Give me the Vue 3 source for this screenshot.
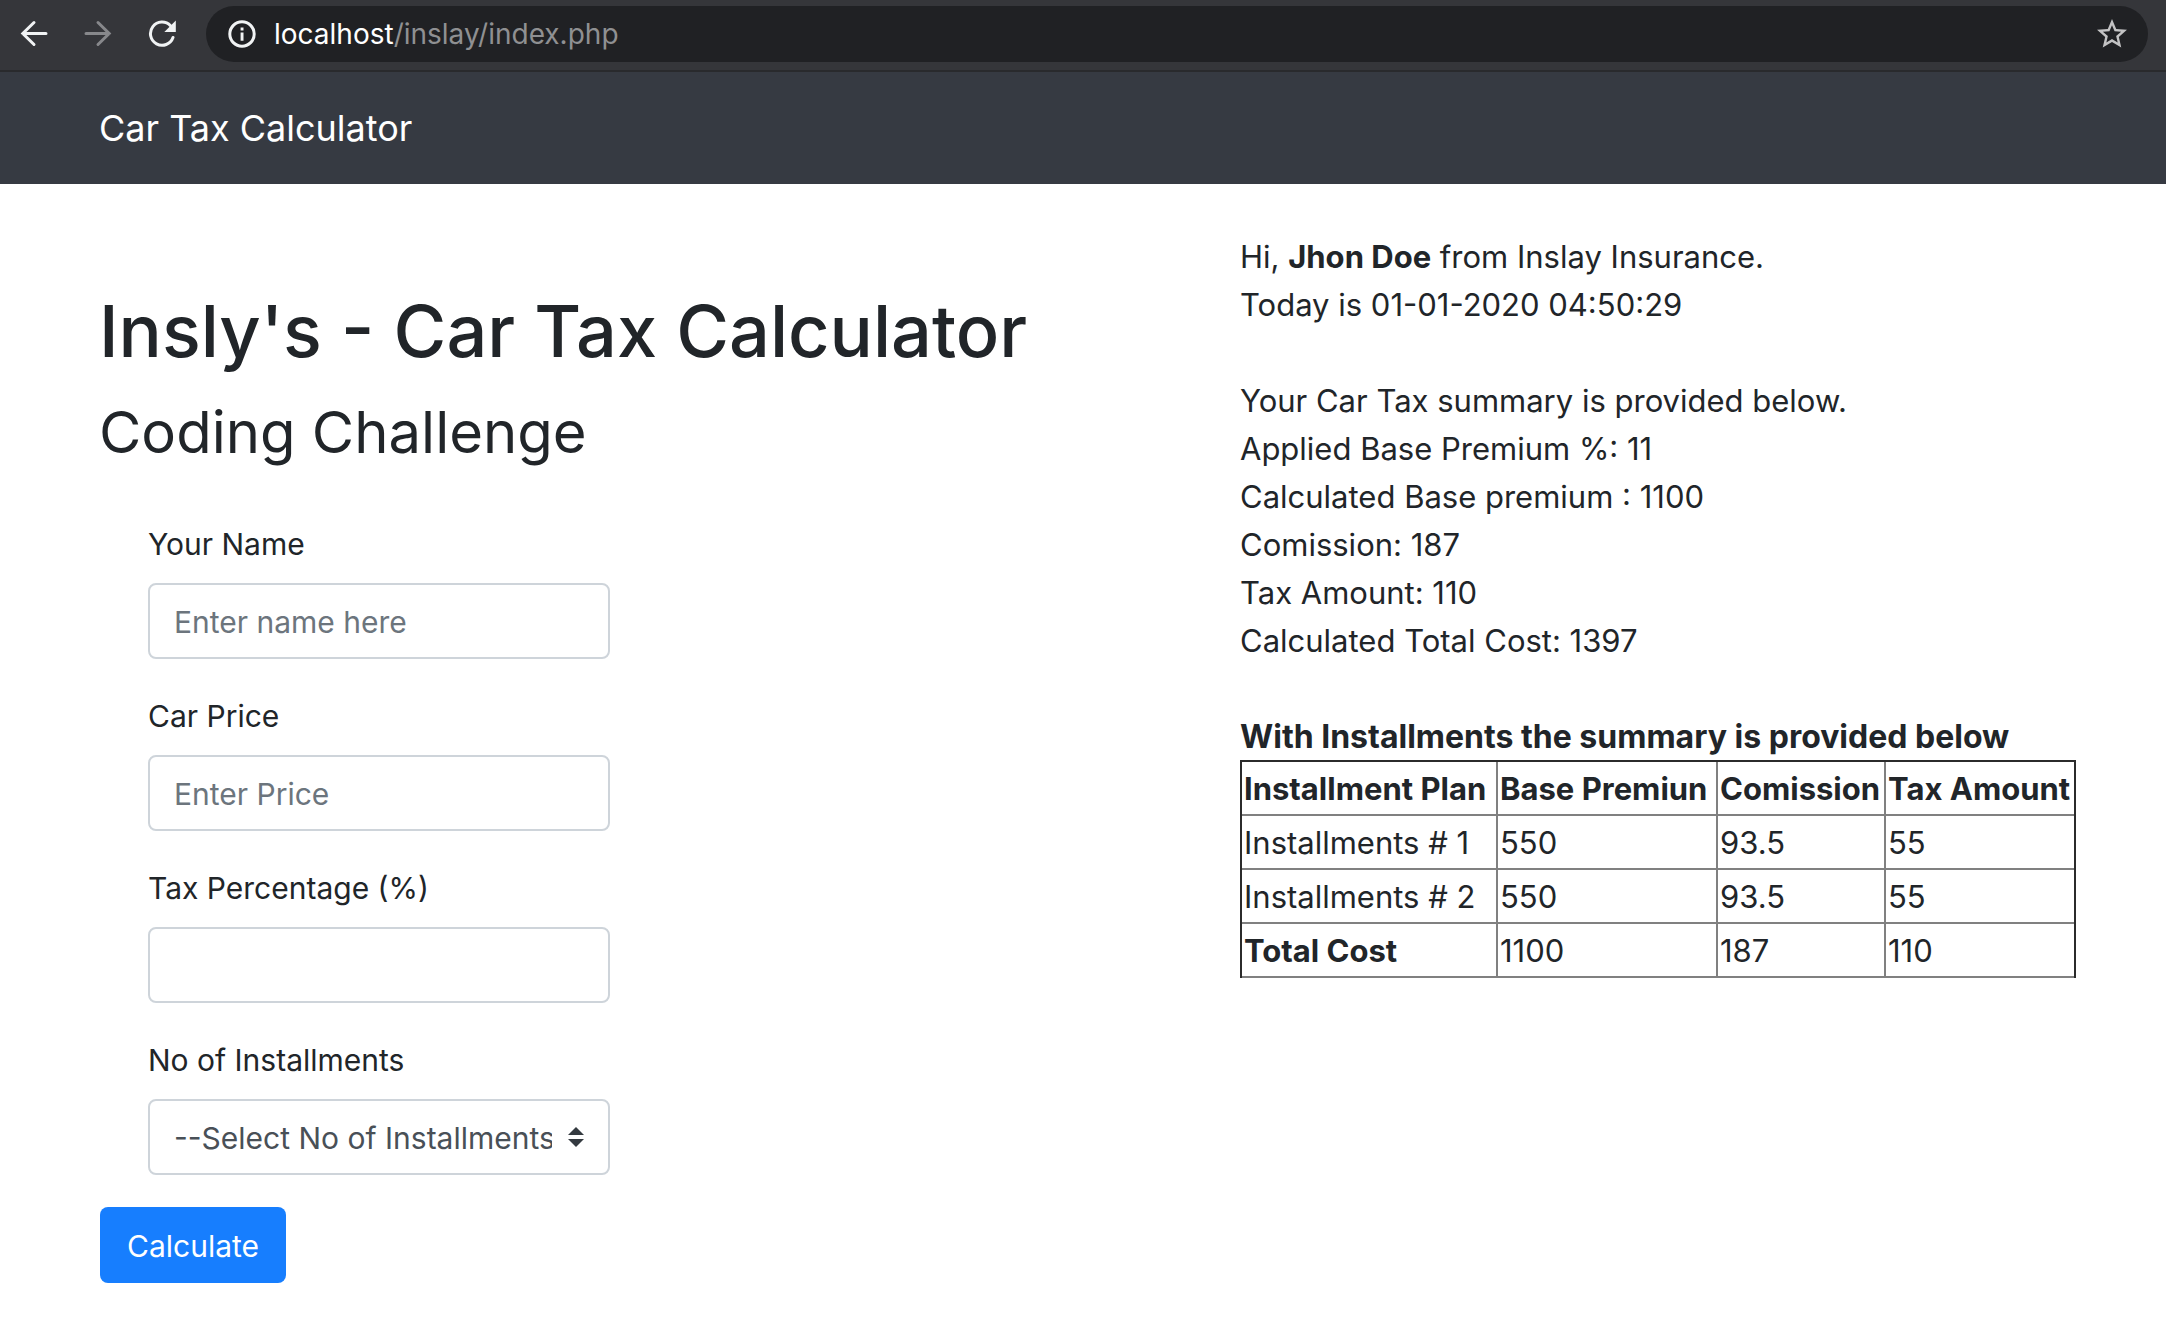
<script setup>
import { ref } from 'vue'

const fields = [
  { id: 'name', label: 'Your Name', placeholder: 'Enter name here' },
  { id: 'price', label: 'Car Price', placeholder: 'Enter Price' },
  { id: 'tax', label: 'Tax Percentage (%)', placeholder: '' },
]
const values = ref({ name: '', price: '', tax: '' })
const installments = ref('')

const summary = [
  'Your Car Tax summary is provided below.',
  'Applied Base Premium %: 11',
  'Calculated Base premium : 1100',
  'Comission: 187',
  'Tax Amount: 110',
  'Calculated Total Cost: 1397',
]

const rows = [
  ['Installments # 1', '550', '93.5', '55'],
  ['Installments # 2', '550', '93.5', '55'],
]
const total = ['1100', '187', '110']
</script>

<template>
  <div class="page">
    <div class="toolbar">
      <button class="tool" type="button" aria-label="Back">
        <svg viewBox="0 0 28 28"><path d="M26 13.500H3M14 2.500L2.800 13.500L14 24.500" /></svg>
      </button>
      <button class="tool dim" type="button" aria-label="Forward">
        <svg viewBox="0 0 28 28"><path d="M2 13.500H25M14 2.500L25.200 13.500L14 24.500" /></svg>
      </button>
      <button class="tool" type="button" aria-label="Reload">
        <svg viewBox="0 0 28 28">
          <path d="M25 17.500A11.600 11.600 0 1 1 22.500 5.700" />
          <path class="solid" d="M27.800 0.500V12H16.300z" />
        </svg>
      </button>
      <div class="address">
        <svg class="info" viewBox="0 0 28 28">
          <circle cx="14" cy="14" r="12.200" />
          <path class="solid" d="M12.600 12.500h2.900v8.200h-2.900zM12.600 7.600h2.900v2.900h-2.900z" />
        </svg>
        <span class="url">localhost<span class="path">/inslay/index.php</span></span>
        <button class="star" type="button" aria-label="Bookmark this page">
          <svg viewBox="0 0 24 24">
            <path d="M22 9.240l-7.190-.62L12 2 9.190 8.630 2 9.240l5.460 4.730L5.820 21 12 17.270 18.180 21l-1.630-7.030L22 9.240zM12 15.400l-3.760 2.270 1-4.280-3.320-2.880 4.380-.38L12 6.100l1.710 4.040 4.380.38-3.320 2.880 1 4.280L12 15.400z" />
          </svg>
        </button>
      </div>
    </div>

    <nav class="navbar"><a class="brand" href="#">Car Tax Calculator</a></nav>

    <main class="content">
      <section class="calculator">
        <h1>Insly's - Car Tax Calculator</h1>
        <h2>Coding Challenge</h2>
        <form @submit.prevent>
          <div class="fields">
            <div v-for="f in fields" :key="f.id" class="field">
              <label :for="f.id">{{ f.label }}</label>
              <input :id="f.id" v-model="values[f.id]" class="control" type="text" :placeholder="f.placeholder" />
            </div>
            <div class="field">
              <label for="installments">No of Installments</label>
              <div class="select-wrap">
                <select id="installments" v-model="installments" class="control">
                  <option value="">--Select No of Installments--</option>
                  <option v-for="n in 12" :key="n" :value="n">{{ n }}</option>
                </select>
                <svg class="caret" viewBox="0 0 4 5"><path d="M2 0L0 2h4zm0 5L0 3h4z" /></svg>
              </div>
            </div>
          </div>
          <button class="submit" type="submit">Calculate</button>
        </form>
      </section>

      <section class="result">
        <p>Hi, <b>Jhon Doe</b> from Inslay Insurance.</p>
        <p>Today is 01-01-2020 04:50:29</p>
        <div class="group">
          <p v-for="line in summary" :key="line">{{ line }}</p>
        </div>
        <div class="group">
          <p class="table-title"><b>With Installments the summary is provided below</b></p>
          <table>
            <colgroup>
              <col class="plan" /><col class="premium" /><col class="comission" /><col class="amount" />
            </colgroup>
            <thead>
              <tr>
                <th>Installment Plan</th>
                <th>Base Premiun</th>
                <th>Comission</th>
                <th>Tax Amount</th>
              </tr>
            </thead>
            <tbody>
              <tr v-for="row in rows" :key="row[0]">
                <td v-for="(cell, i) in row" :key="i">{{ cell }}</td>
              </tr>
              <tr>
                <th>Total Cost</th>
                <td v-for="cell in total" :key="cell">{{ cell }}</td>
              </tr>
            </tbody>
          </table>
        </div>
      </section>
    </main>
  </div>
</template>

<style>
body {
  margin: 0;
  background: #fff;
}
</style>

<style scoped>
.page {
  font-family: Inter, "Liberation Sans", sans-serif;
  font-size: 31px;
  line-height: 48px;
  color: #212529;
}
.page * {
  box-sizing: border-box;
}
button,
input,
select {
  font: inherit;
  margin: 0;
}
svg {
  display: block;
}

.toolbar {
  display: flex;
  align-items: center;
  gap: 36px;
  padding: 6px 18px 8px 20px;
  background: #35363a;
  border-bottom: 2px solid #292a2d;
}
.tool,
.star {
  padding: 0;
  border: 0;
  background: none;
}
.tool svg,
.info {
  width: 28px;
  height: 28px;
  fill: none;
  stroke: #f1f3f4;
  stroke-width: 3;
  stroke-linecap: round;
}
.tool.dim svg {
  stroke: #87888b;
}
.tool .solid,
.info .solid {
  fill: #f1f3f4;
  stroke: none;
}
.address {
  flex: 1;
  display: flex;
  align-items: center;
  height: 56px;
  margin-left: -6px;
  padding: 0 18px 0 22px;
  border-radius: 28px;
  background: #202124;
}
.url {
  flex: 1;
  margin-left: 18px;
  font-size: 28px;
  color: #fff;
}
.path {
  color: #8f9092;
}
.star svg {
  width: 36px;
  height: 36px;
  fill: #c3c3c4;
}

.navbar {
  padding: 32px 99px;
  background: #363a42;
}
.brand {
  display: block;
  font-size: 36px;
  color: #fff;
  text-decoration: none;
}

.content {
  display: grid;
  grid-template-columns: 1fr auto;
  padding: 49px 90px 44px 99px;
}
h1,
h2,
p {
  margin: 0;
}
.calculator {
  padding-top: 50px;
}
h1 {
  font-size: 72px;
  line-height: 96px;
  font-weight: 500;
}
h2 {
  margin: 14px 0 49px;
  font-size: 58px;
  line-height: 78px;
  font-weight: 400;
}
form {
  padding-left: 1px;
  font-size: 30px;
}
.fields {
  display: grid;
  gap: 33px;
  width: 462px;
  margin: 0 0 32px 48px;
}
label {
  display: block;
  margin-bottom: 15px;
}
.control {
  display: block;
  width: 100%;
  height: 76px;
  padding: 13px 24px 11px;
  border: 2px solid #ced4da;
  border-radius: 8px;
  background: #fff;
  color: #495057;
}
.control::placeholder {
  color: #6c757d;
  opacity: 1;
}
.select-wrap {
  position: relative;
}
select.control {
  appearance: none;
  padding-right: 56px;
}
.caret {
  position: absolute;
  top: 28px;
  right: 26px;
  width: 16px;
  height: 20px;
  fill: #343a40;
  pointer-events: none;
}
.submit {
  min-width: 186px;
  padding: 15px 26px 13px;
  border: 0;
  border-radius: 8px;
  background: #177efe;
  color: #fff;
}

.group {
  margin-top: 48px;
}
.table-title {
  font-size: 32px;
}
table {
  width: 836px;
  margin-top: -1px;
  table-layout: fixed;
  border-collapse: separate;
  border-spacing: 0;
  border: 2px solid #2b2b2b;
  border-bottom: 0;
}
.plan {
  width: 256px;
}
.premium {
  width: 220px;
}
.comission {
  width: 168px;
}
th,
td {
  padding: 3px 2px 1px;
  border: 0 solid #808080;
  border-width: 0 2px 2px 0;
  text-align: left;
  white-space: nowrap;
}
th:last-child,
td:last-child {
  border-right: 0;
}
</style>
